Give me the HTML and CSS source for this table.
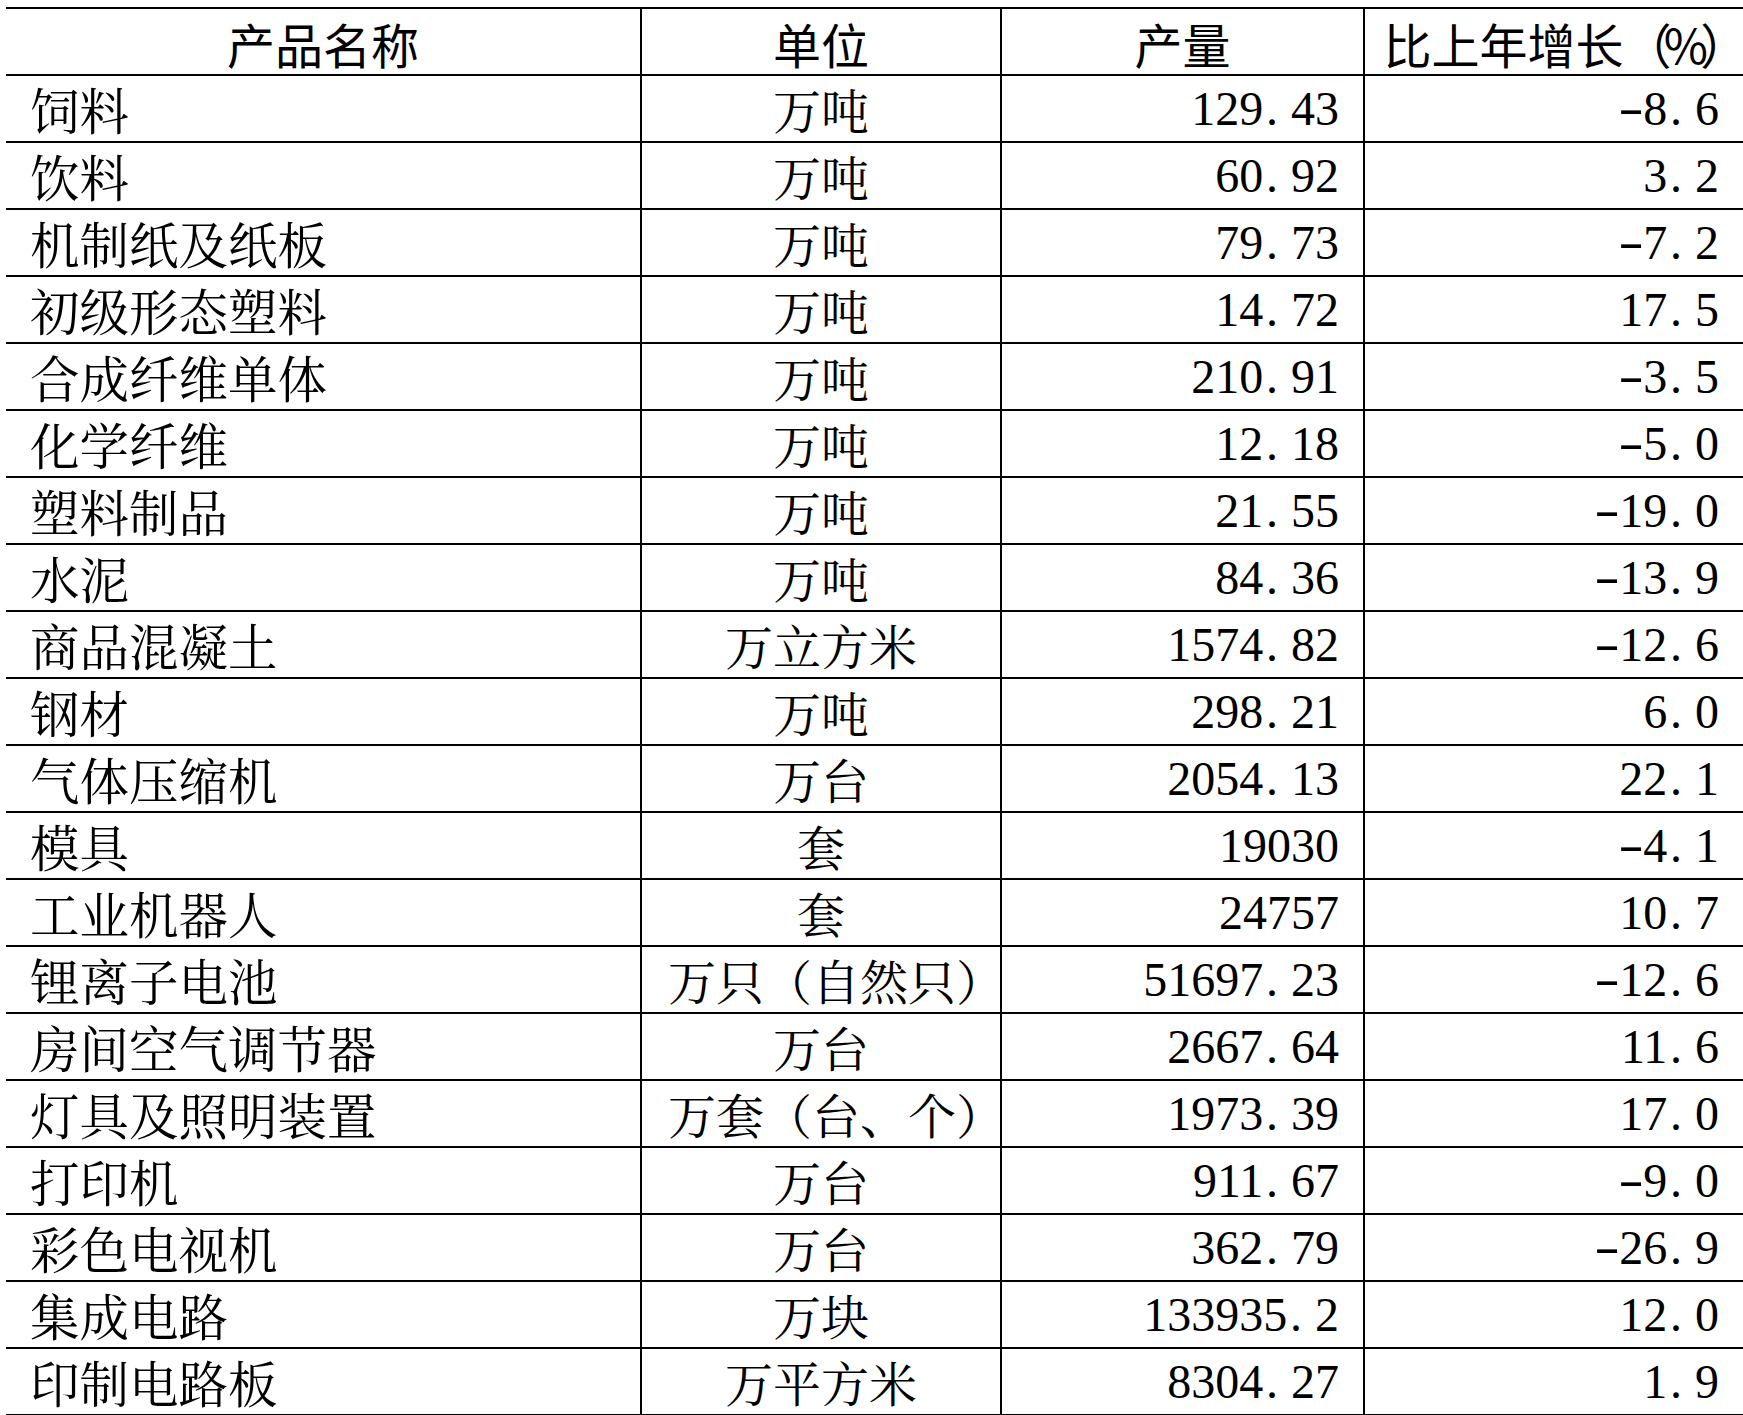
FILE: index.html
```html
<!DOCTYPE html>
<html lang="zh-CN">
<head>
<meta charset="utf-8">
<title>主要工业产品产量</title>
<link rel="stylesheet" href="styles.css">
</head>
<body>
<table class="stats">
  <colgroup>
    <col class="c-name">
    <col class="c-unit">
    <col class="c-qty">
    <col class="c-growth">
  </colgroup>
  <thead>
    <tr><th>产品名称</th><th>单位</th><th>产量</th><th class="th-growth">比上年增长<span class="pct">（%）</span></th></tr>
  </thead>
  <tbody>
    <tr><td class="name">饲料</td><td class="unit">万吨</td><td class="num">129<span class="pt">.</span>43</td><td class="num last"><span class="mn">-</span>8<span class="pt">.</span>6</td></tr>
    <tr><td class="name">饮料</td><td class="unit">万吨</td><td class="num">60<span class="pt">.</span>92</td><td class="num last">3<span class="pt">.</span>2</td></tr>
    <tr><td class="name">机制纸及纸板</td><td class="unit">万吨</td><td class="num">79<span class="pt">.</span>73</td><td class="num last"><span class="mn">-</span>7<span class="pt">.</span>2</td></tr>
    <tr><td class="name">初级形态塑料</td><td class="unit">万吨</td><td class="num">14<span class="pt">.</span>72</td><td class="num last">17<span class="pt">.</span>5</td></tr>
    <tr><td class="name">合成纤维单体</td><td class="unit">万吨</td><td class="num">210<span class="pt">.</span>91</td><td class="num last"><span class="mn">-</span>3<span class="pt">.</span>5</td></tr>
    <tr><td class="name">化学纤维</td><td class="unit">万吨</td><td class="num">12<span class="pt">.</span>18</td><td class="num last"><span class="mn">-</span>5<span class="pt">.</span>0</td></tr>
    <tr><td class="name">塑料制品</td><td class="unit">万吨</td><td class="num">21<span class="pt">.</span>55</td><td class="num last"><span class="mn">-</span>19<span class="pt">.</span>0</td></tr>
    <tr><td class="name">水泥</td><td class="unit">万吨</td><td class="num">84<span class="pt">.</span>36</td><td class="num last"><span class="mn">-</span>13<span class="pt">.</span>9</td></tr>
    <tr><td class="name">商品混凝土</td><td class="unit">万立方米</td><td class="num">1574<span class="pt">.</span>82</td><td class="num last"><span class="mn">-</span>12<span class="pt">.</span>6</td></tr>
    <tr><td class="name">钢材</td><td class="unit">万吨</td><td class="num">298<span class="pt">.</span>21</td><td class="num last">6<span class="pt">.</span>0</td></tr>
    <tr><td class="name">气体压缩机</td><td class="unit">万台</td><td class="num">2054<span class="pt">.</span>13</td><td class="num last">22<span class="pt">.</span>1</td></tr>
    <tr><td class="name">模具</td><td class="unit">套</td><td class="num">19030</td><td class="num last"><span class="mn">-</span>4<span class="pt">.</span>1</td></tr>
    <tr><td class="name">工业机器人</td><td class="unit">套</td><td class="num">24757</td><td class="num last">10<span class="pt">.</span>7</td></tr>
    <tr><td class="name">锂离子电池</td><td class="unit paren">万只（自然只）</td><td class="num">51697<span class="pt">.</span>23</td><td class="num last"><span class="mn">-</span>12<span class="pt">.</span>6</td></tr>
    <tr><td class="name">房间空气调节器</td><td class="unit">万台</td><td class="num">2667<span class="pt">.</span>64</td><td class="num last">11<span class="pt">.</span>6</td></tr>
    <tr><td class="name">灯具及照明装置</td><td class="unit paren">万套（台、个）</td><td class="num">1973<span class="pt">.</span>39</td><td class="num last">17<span class="pt">.</span>0</td></tr>
    <tr><td class="name">打印机</td><td class="unit">万台</td><td class="num">911<span class="pt">.</span>67</td><td class="num last"><span class="mn">-</span>9<span class="pt">.</span>0</td></tr>
    <tr><td class="name">彩色电视机</td><td class="unit">万台</td><td class="num">362<span class="pt">.</span>79</td><td class="num last"><span class="mn">-</span>26<span class="pt">.</span>9</td></tr>
    <tr><td class="name">集成电路</td><td class="unit">万块</td><td class="num">133935<span class="pt">.</span>2</td><td class="num last">12<span class="pt">.</span>0</td></tr>
    <tr><td class="name">印制电路板</td><td class="unit">万平方米</td><td class="num">8304<span class="pt">.</span>27</td><td class="num last">1<span class="pt">.</span>9</td></tr>
  </tbody>
</table>
</body>
</html>
```
FILE: styles.css
```css
html {
  overflow: hidden;
  background: #fff;
}
body {
  margin: 7px 0 0 6px;
  color: #000;
  font-family: "Noto Serif CJK SC", "AR PL UMing CN", "Noto Sans CJK SC", serif;
}
.stats {
  table-layout: fixed;
  width: 1737px;
  border-collapse: separate;
  border-spacing: 0;
  border-top: 2px solid #000;
}
.c-name { width: 636px; }
.c-unit { width: 360px; }
.c-qty { width: 363px; }
.c-growth { width: 378px; }

.stats th,
.stats td {
  box-sizing: border-box;
  height: 67px;
  padding: 0;
  border-bottom: 2px solid #000;
  border-right: 2px solid #000;
  white-space: nowrap;
  line-height: 60px;
  vertical-align: middle;
}
.stats th:last-child,
.stats td.last {
  border-right: none;
}
.stats th {
  font-family: "Noto Sans CJK SC", sans-serif;
  font-weight: 400;
  font-size: 48px;
  text-align: center;
  padding-top: 2px;
}
.stats th.th-growth {
  padding-left: 16px;
}
.pct {
  letter-spacing: -0.16em;
}
.stats td {
  font-size: 48px;
}
.name {
  text-align: left;
  padding-left: 24px !important;
  font-size: 49.5px !important;
}
.unit {
  text-align: center;
}
.unit.paren {
  padding-left: 26px;
}
.num {
  text-align: right;
  padding-right: 24px !important;
  font-family: "Liberation Serif", "DejaVu Serif", serif;
}
.pt {
  display: inline-block;
  width: 0.58em;
  text-align: left;
  padding-left: 0.06em;
  box-sizing: border-box;
}
.mn {
  display: inline-block;
  width: 0.5em;
  text-align: center;
  transform: scaleX(1.6) translateY(-0.03em);
}
```
